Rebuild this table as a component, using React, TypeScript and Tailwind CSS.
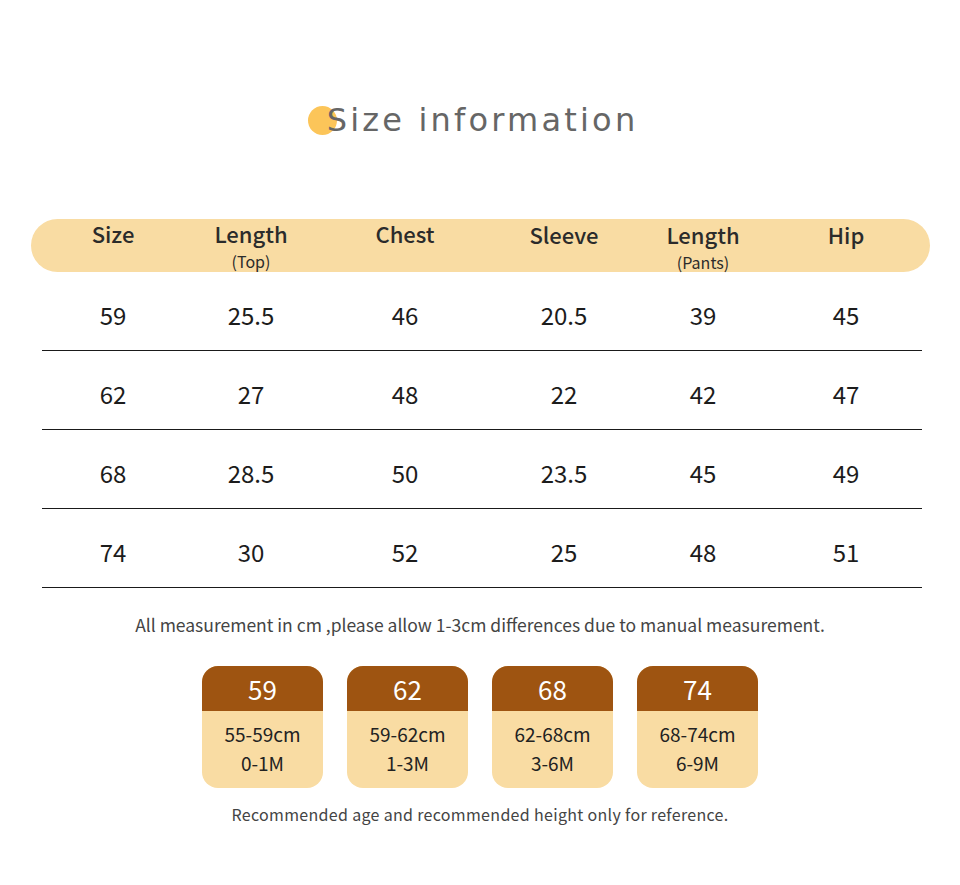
import React from "react";

const cols = "grid grid-cols-[142px_134px_174px_144px_134px_152px]";

const rows = [
  ["59", "25.5", "46", "20.5", "39", "45"],
  ["62", "27", "48", "22", "42", "47"],
  ["68", "28.5", "50", "23.5", "45", "49"],
  ["74", "30", "52", "25", "48", "51"],
];

const cards = [
  ["59", "55-59cm", "0-1M"],
  ["62", "59-62cm", "1-3M"],
  ["68", "62-68cm", "3-6M"],
  ["74", "68-74cm", "6-9M"],
];

export default function App() {
  const sans = { fontFamily: '"Noto Sans CJK SC", "Noto Sans", sans-serif' };
  return (
    <div className="w-[960px] h-[885px] bg-white flex flex-col items-center" style={sans}>
      <div className="mt-[98px] h-[44px] flex items-center ml-[-14px]">
        <div className="w-[29px] h-[29px] rounded-full bg-[#fcc559]" />
        <span
          className="ml-[-10px] text-[32px] leading-[44px] text-[#666666] tracking-[0.1em]"
          style={{ fontFamily: '"DejaVu Sans", sans-serif' }}
        >
          Size information
        </span>
      </div>

      <div className="mt-[77px] w-[960px] flex flex-col">
        <div className="ml-[31px] w-[899px] h-[53px] rounded-full bg-[#f9dca3] pl-[11px]">
          <div className={`${cols} pt-[1px] text-[#2b2b2b]`}>
            <div className="text-center text-[22px] leading-[26px] font-medium">Size</div>
            <div className="flex flex-col items-center">
              <span className="text-[22px] leading-[26px] font-medium">Length</span>
              <span className="text-[16px] leading-[18px] mt-[6px]">(Top)</span>
            </div>
            <div className="text-center text-[22px] leading-[26px] font-medium">Chest</div>
            <div className="text-center text-[22px] leading-[26px] font-medium mt-[1px]">Sleeve</div>
            <div className="flex flex-col items-center mt-[1px]">
              <span className="text-[22px] leading-[26px] font-medium">Length</span>
              <span className="text-[16px] leading-[18px] mt-[6px]">(Pants)</span>
            </div>
            <div className="text-center text-[22px] leading-[26px] font-medium mt-[1px]">Hip</div>
          </div>
        </div>

        <div className="ml-[42px] w-[880px] flex flex-col">
          {rows.map((r, i) => (
            <div key={i} className="h-[79px] border-b border-[#1a1a1a]">
              <div className={`${cols} pt-[28px] text-[24px] leading-[30px] text-[#1c1c1c]`}>
                {r.map((c, j) => (
                  <div key={j} className="text-center">
                    {c}
                  </div>
                ))}
              </div>
            </div>
          ))}
        </div>
      </div>

      <div className="mt-[25px] text-[17.5px] leading-[24px] text-[#444444]">
        All measurement in cm ,please allow 1-3cm differences due to manual measurement.
      </div>

      <div className="mt-[29px] flex gap-[24px]">
        {cards.map((c, i) => (
          <div key={i} className="w-[121px] h-[122px] rounded-[16px] overflow-hidden flex flex-col bg-[#f9dca3]">
            <div className="h-[45px] bg-[#9e5411] flex items-center justify-center text-white text-[26px] leading-[30px]">
              {c[0]}
            </div>
            <div className="flex flex-col items-center pt-[8px] text-[#222222] text-[19px] leading-[29px]">
              <span>{c[1]}</span>
              <span>{c[2]}</span>
            </div>
          </div>
        ))}
      </div>

      <div className="mt-[15px] text-[16px] leading-[22px] text-[#444444] tracking-[0.02em]">
        Recommended age and recommended height only for reference.
      </div>
    </div>
  );
}
